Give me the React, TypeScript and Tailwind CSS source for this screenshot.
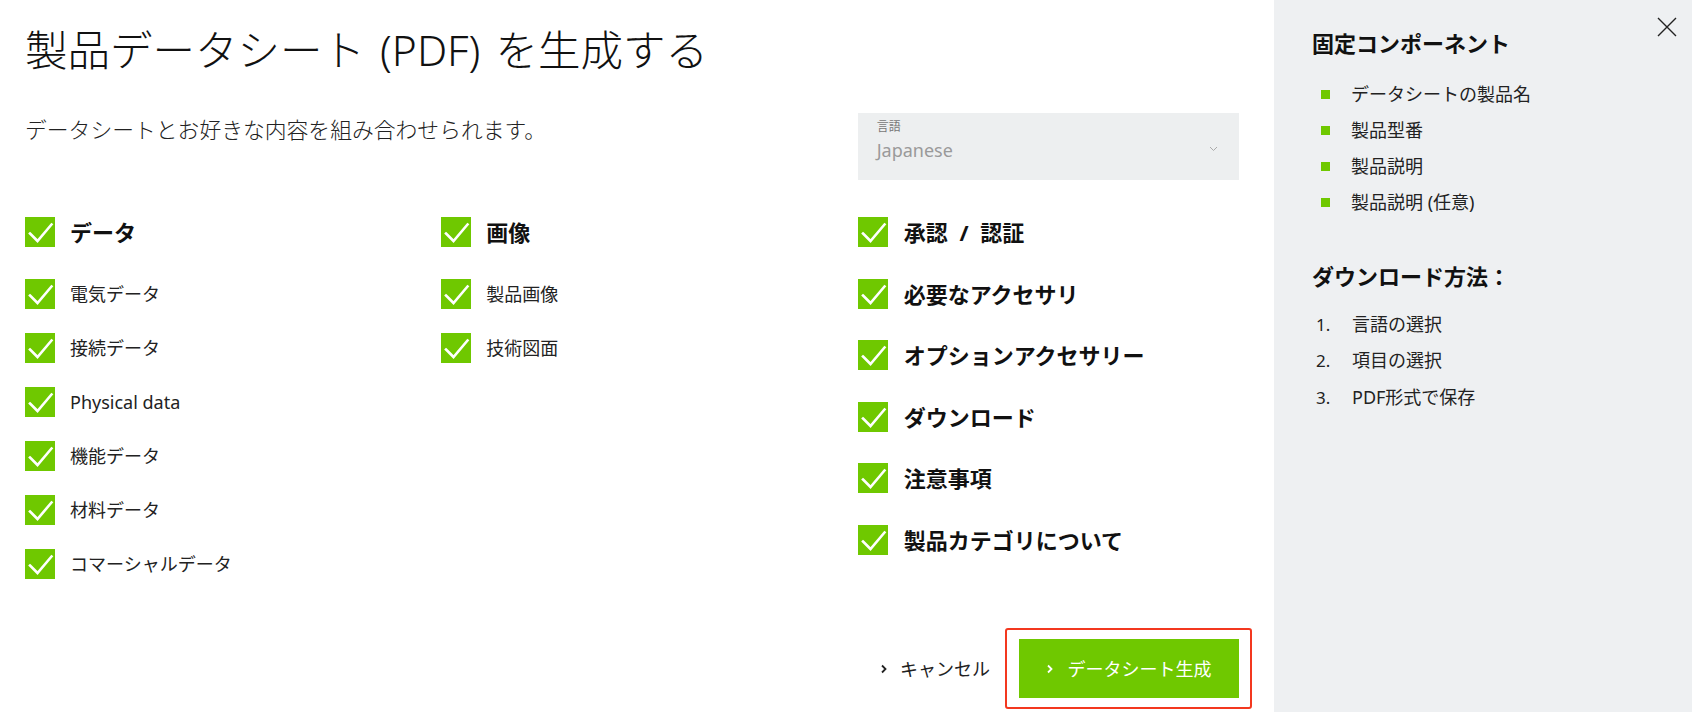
import React from "react";

const FONT = { fontFamily: '"Noto Sans", "Noto Sans CJK JP", sans-serif' };

function CheckBox() {
  return (
    <span className="flex h-[30px] w-[30px] shrink-0 items-center justify-center bg-[#6fc800]">
      <svg width="30" height="30" viewBox="0 0 30 30" fill="none">
        <path d="M5 16.5 L12.5 24 L26.5 7.5" stroke="white" strokeWidth="2.6" strokeLinecap="square" />
      </svg>
    </span>
  );
}

function Chevron({ color }: { color: string }) {
  return (
    <svg width="6" height="10" viewBox="0 0 6 10" fill="none">
      <path d="M1 1.5 L4.5 5 L1 8.5" stroke={color} strokeWidth="1.8" />
    </svg>
  );
}

function Item({ label, bold }: { label: string; bold?: boolean }) {
  return (
    <div className="flex h-[30px] items-center gap-[15px]">
      <CheckBox />
      <span
        className={
          bold
            ? "text-[22px] font-bold leading-[30px] text-[#111]"
            : "text-[18px] leading-[30px] text-[#222]"
        }
      >
        {label}
      </span>
    </div>
  );
}

const dataItems = ["電気データ", "接続データ", "Physical data", "機能データ", "材料データ", "コマーシャルデータ"];
const imageItems = ["製品画像", "技術図面"];
const otherItems = ["承認 / 認証", "必要なアクセサリ", "オプションアクセサリー", "ダウンロード", "注意事項", "製品カテゴリについて"];

const fixedItems = ["データシートの製品名", "製品型番", "製品説明", "製品説明 (任意)"];
const steps = ["言語の選択", "項目の選択", "PDF形式で保存"];

export default function App() {
  return (
    <div className="flex h-[712px] w-[1692px] overflow-hidden bg-white" style={FONT}>
      {/* Main form */}
      <div className="flex w-[1274px] shrink-0 flex-col pl-[25px]">
        <h1 className="pt-[22px] text-[42.5px] font-light leading-[56px] text-[#111] [word-spacing:4px]">
          製品データシート (PDF) を生成する
        </h1>

        <div className="mt-[35px] grid w-[1249px] grid-cols-3">
          <p className="col-span-2 mt-[3px] text-[21.8px] font-light leading-[28px] text-[#222]">
            データシートとお好きな内容を組み合わせられます。
          </p>
          <div className="flex h-[67px] w-[381px] items-start justify-between bg-[#edeff0] pl-[19px] pr-[21px] pt-[6px]">
            <div className="flex flex-col">
              <span className="text-[12px] leading-[16px] text-[#777]">言語</span>
              <span className="text-[18px] leading-[30px] text-[#9a9a9a]">Japanese</span>
            </div>
            <svg className="mt-[27px]" width="9" height="6" viewBox="0 0 9 6" fill="none">
              <path d="M1 1 L4.5 4.5 L8 1" stroke="#aaa" strokeWidth="1" />
            </svg>
          </div>
        </div>

        <div className="mt-[37px] grid w-[1249px] grid-cols-3">
          <div className="flex flex-col">
            <Item label="データ" bold />
            <div className="mt-[32px] flex flex-col gap-[24px]">
              {dataItems.map((l) => (
                <Item key={l} label={l} />
              ))}
            </div>
          </div>
          <div className="flex flex-col">
            <Item label="画像" bold />
            <div className="mt-[32px] flex flex-col gap-[24px]">
              {imageItems.map((l) => (
                <Item key={l} label={l} />
              ))}
            </div>
          </div>
          <div className="flex flex-col gap-[31.6px]">
            {otherItems.map((l) => (
              <div key={l} className="flex h-[30px] items-center gap-[16px]">
                <CheckBox />
                <span className="text-[22px] font-bold leading-[30px] text-[#111] [word-spacing:6px]">{l}</span>
              </div>
            ))}
          </div>
        </div>

        <div className="mt-[60px] flex items-center justify-end pr-[35px]">
          <button className="flex items-center gap-[13px] text-[18px] leading-[28px] text-[#222]">
            <Chevron color="#222" />
            キャンセル
          </button>
          <div className="relative ml-[29px]">
            <button className="flex h-[59px] w-[220px] items-center justify-center gap-[15px] bg-[#6fc800] text-[18px] leading-[28px] text-white">
              <Chevron color="white" />
              データシート生成
            </button>
            <div className="pointer-events-none absolute -bottom-[11px] -left-[14px] -right-[13px] -top-[11px] rounded-[3px] border-2 border-[#f3381f]" />
          </div>
        </div>
      </div>

      {/* Side panel */}
      <aside className="relative flex-1 bg-[#eef0f2] pl-[38px] pt-[28px] text-[#222]">
        <button className="absolute right-[15px] top-[17px]">
          <svg width="20" height="20" viewBox="0 0 20 20" fill="none">
            <path d="M1 1 L19 19 M19 1 L1 19" stroke="#222" strokeWidth="1.4" />
          </svg>
        </button>

        <h2 className="text-[22px] font-bold leading-[30px] text-[#111]">固定コンポーネント</h2>
        <ul className="mt-[18px] flex flex-col">
          {fixedItems.map((t) => (
            <li key={t} className="flex h-[36px] items-center pl-[9px] text-[18px]">
              <span className="h-[9px] w-[9px] shrink-0 bg-[#6fc800]" />
              <span className="ml-[21px]">{t}</span>
            </li>
          ))}
        </ul>

        <h2 className="mt-[41px] text-[22px] font-bold leading-[30px] text-[#111]">ダウンロード方法：</h2>
        <ol className="mt-[15px] flex flex-col">
          {steps.map((t, i) => (
            <li key={t} className="flex h-[36.5px] items-center pl-[4px] text-[17px]">
              <span className="w-[36px]">{i + 1}.</span>
              <span className="text-[18px]">{t}</span>
            </li>
          ))}
        </ol>
      </aside>
    </div>
  );
}
